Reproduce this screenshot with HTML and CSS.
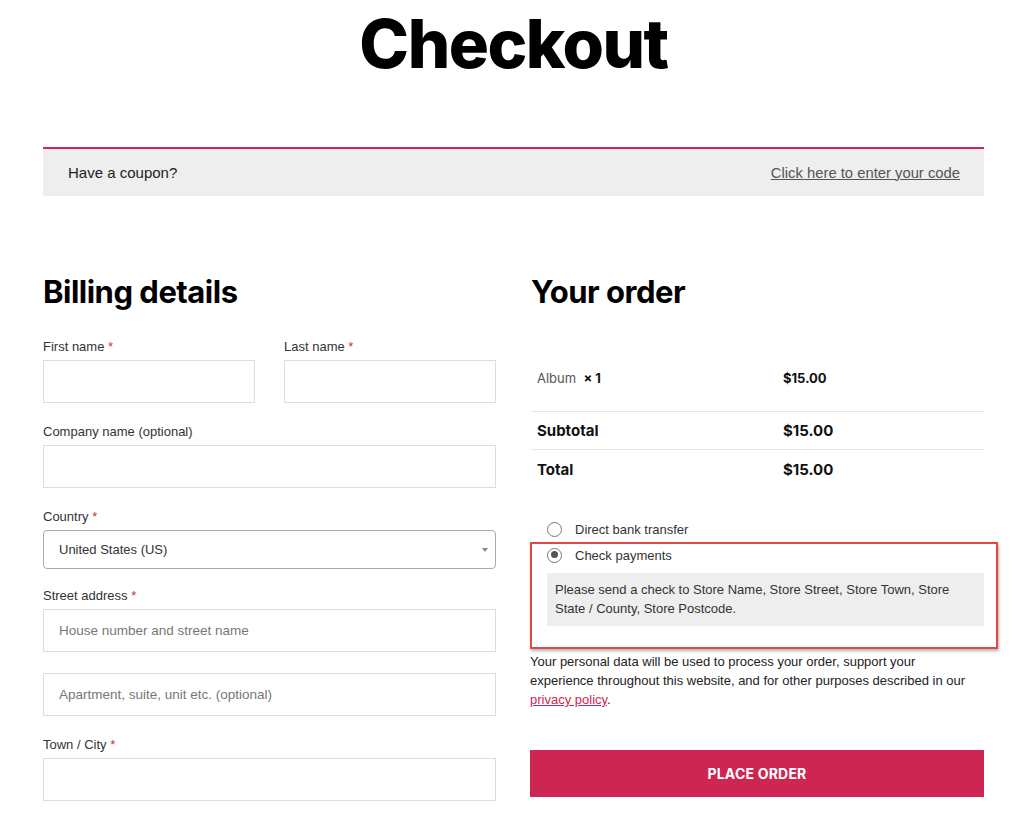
FILE: index.html
```html
<!DOCTYPE html>
<html>
<head>
<meta charset="utf-8">
<link rel="stylesheet" href="styles.css">
</head>
<body>
<div class="page">
  <h1 class="title">Checkout</h1>
  <div class="coupon">
    <span>Have a coupon?</span>
    <a href="#" class="coupon-link">Click here to enter your code</a>
  </div>
  <div class="columns">
    <div class="billing">
      <h2 class="heading">Billing details</h2>
      <div class="row-2">
        <div class="field">
          <label class="label">First name <span class="req">*</span></label>
          <div class="input"></div>
        </div>
        <div class="field">
          <label class="label">Last name <span class="req">*</span></label>
          <div class="input"></div>
        </div>
      </div>
      <div class="field">
        <label class="label">Company name (optional)</label>
        <div class="input"></div>
      </div>
      <div class="field field-select">
        <label class="label">Country <span class="req">*</span></label>
        <div class="select"><span>United States (US)</span><span class="arrow"></span></div>
      </div>
      <div class="field">
        <label class="label">Street address <span class="req">*</span></label>
        <div class="input placeholder">House number and street name</div>
        <div class="input placeholder second">Apartment, suite, unit etc. (optional)</div>
      </div>
      <div class="field">
        <label class="label">Town / City <span class="req">*</span></label>
        <div class="input"></div>
      </div>
    </div>
    <div class="order">
      <h2 class="heading">Your order</h2>
      <div class="order-table">
        <div class="trow item">
          <div class="cell"><span class="pname">Album</span>&nbsp; <strong class="qty">× 1</strong></div>
          <div class="cell price">$15.00</div>
        </div>
        <div class="trow total">
          <div class="cell">Subtotal</div>
          <div class="cell">$15.00</div>
        </div>
        <div class="trow total last">
          <div class="cell">Total</div>
          <div class="cell">$15.00</div>
        </div>
      </div>
      <div class="payments">
        <div class="method"><span class="radio"></span><span>Direct bank transfer</span></div>
        <div class="method checked"><span class="radio"></span><span>Check payments</span></div>
        <div class="pay-box">Please send a check to Store Name, Store Street, Store Town, Store State / County, Store Postcode.</div>
        <div class="highlight"></div>
      </div>
      <p class="privacy">Your personal data will be used to process your order, support your experience throughout this website, and for other purposes described in our <a href="#" class="plink">privacy policy</a>.</p>
      <button class="place">PLACE ORDER</button>
    </div>
  </div>
</div>
</body>
</html>
```

FILE: styles.css
```css
* { box-sizing: border-box; }
html, body { margin: 0; padding: 0; background: #fff; }
body { font-family: "Liberation Sans", Arial, sans-serif; color: #333; overflow: hidden; height: 816px; }
.page { width: 941px; margin-left: 43px; }
.title {
  font-family: Inter, sans-serif;
  font-weight: 800;
  font-size: 67px;
  letter-spacing: -1.5px;
  line-height: 1;
  text-align: center;
  color: #000;
  margin: 10px 0 0 0;
}
.coupon {
  margin-top: 70px;
  border-top: 2px solid #cd2653;
  background: #eeeeee;
  height: 49px;
  display: flex;
  justify-content: space-between;
  align-items: center;
  padding: 0 24px 0 25px;
  font-size: 15px;
  color: #222;
}
.coupon-link { color: #555; text-decoration: underline; font-size: 14.8px; }
.columns { display: flex; gap: 35px; margin-top: 80px; }
.billing { width: 453px; }
.order { width: 453px; }
.heading {
  font-family: Inter, sans-serif;
  font-weight: 700;
  font-size: 31px;
  letter-spacing: -0.5px;
  line-height: 1;
  color: #000;
  margin: 0 0 32px 0;
}
.row-2 { display: flex; gap: 29px; }
.row-2 .field { width: 212px; }
.field { margin-bottom: 21px; }
.field-select { margin-bottom: 19px; }
.label { display: block; font-size: 13px; line-height: 16px; color: #333; margin-bottom: 5px; }
.req { color: #c0392b; }
.input {
  height: 43px;
  border: 1px solid #ddd;
  background: #fff;
  font-size: 13.5px;
  color: #777;
  padding: 0 15px;
  display: flex;
  align-items: center;
}
.input.second { margin-top: 21px; }
.select {
  height: 39px;
  border: 1px solid #aaa;
  border-radius: 4px;
  display: flex;
  align-items: center;
  justify-content: space-between;
  padding: 0 7px 0 15px;
  font-size: 13px;
  color: #333;
}
.arrow { width: 0; height: 0; border-left: 3px solid transparent; border-right: 3px solid transparent; border-top: 4px solid #888; }
.order .heading { margin-bottom: 63px; }
.order-table { font-family: Inter, sans-serif; }
.trow { display: flex; border-bottom: 1px solid #e6e6e6; }
.trow.last { border-bottom: none; }
.cell { padding-left: 6px; }
.cell:first-child { width: 246px; }
.item { height: 42px; font-size: 13px; align-items: flex-start; }
.item .cell { line-height: 16px; }
.pname { color: #555; }
.qty { color: #111; font-weight: 700; }
.price { font-weight: 700; color: #111; }
.total { height: 38px; align-items: center; font-weight: 700; font-size: 15px; color: #111; }
.payments { position: relative; margin-top: 30px; padding-left: 16px; }
.method { display: flex; align-items: center; gap: 13px; font-size: 13px; color: #333; height: 22px; margin-left: 0; margin-bottom: 4px; }
.radio { width: 15px; height: 15px; border: 1.5px solid #777; border-radius: 50%; background: #fff; position: relative; }
.method.checked .radio::after { content: ""; position: absolute; left: 2.5px; top: 2.5px; width: 7px; height: 7px; border-radius: 50%; background: #555; }
.pay-box {
  margin-top: 7px;
  background: #eeeeee;
  padding: 7px 12px 8px 8px;
  font-size: 13px;
  line-height: 19px;
  color: #333;
}
.highlight {
  position: absolute;
  left: -1px;
  top: 24px;
  width: 468px;
  height: 107px;
  border: 2px solid #e04848;
  box-shadow: 1px 2px 3px rgba(0,0,0,0.3);
  pointer-events: none;
}
.privacy { font-size: 13px; line-height: 19px; color: #222; margin: 26px 0 0 -1px; padding-right: 2px; }
.plink { color: #cd2653; }
.place {
  display: block;
  width: 454px;
  height: 47px;
  margin-top: 41px;
  margin-left: -1px;
  background: #cd2653;
  border: none;
  color: #fff;
  font-family: Inter, sans-serif;
  font-weight: 700;
  font-size: 14px;
  letter-spacing: 0.2px;
}
```
